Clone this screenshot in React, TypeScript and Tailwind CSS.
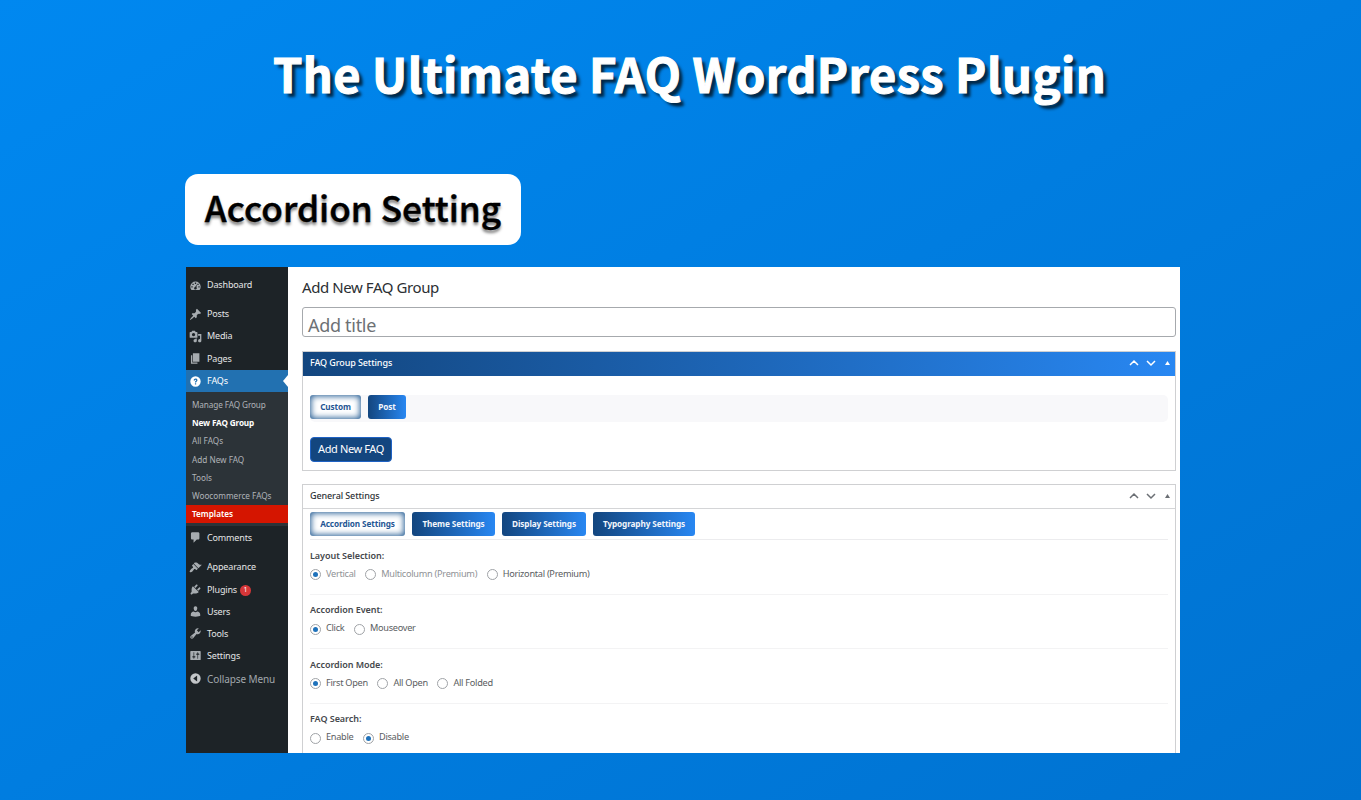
import type { ReactNode } from "react";

const ICONS: Record<string, string> = {
  dashboard:
    "M3.76 17h12.48A8 8 0 1 0 3.76 17zM9 5.5h2v2H9zM5.2 7.2h2v2h-2zM12.8 7.2h2v2h-2zM3.6 11h2v2h-2zM14.4 11h2v2h-2zM12.4 8.2l-1 4.6a2 2 0 1 1-2-.6z",
  posts:
    "M10.44 3.02l1.82-1.82 6.36 6.35-1.83 1.82c-1.05-.68-2.48-.57-3.41.36l-.75.75c-.92.93-1.04 2.35-.35 3.41l-1.83 1.82-2.41-2.41-2.8 2.79c-.42.42-3.38 2.71-3.8 2.29s1.86-3.39 2.28-3.81l2.79-2.79L4.1 9.36l1.83-1.82c1.05.69 2.48.57 3.4-.36l.75-.75c.93-.92 1.05-2.35.36-3.41z",
  media:
    "M13 11V4c0-.55-.45-1-1-1h-1.67L9 1H5L3.67 3H2c-.55 0-1 .45-1 1v7c0 .55.45 1 1 1h10c.55 0 1-.45 1-1zM7 4.5c1.38 0 2.5 1.12 2.5 2.5S8.38 9.5 7 9.5 4.5 8.38 4.5 7 5.62 4.5 7 4.5zM14 6h5v10.5c0 1.38-1.12 2.5-2.5 2.5S14 17.88 14 16.5s1.12-2.5 2.5-2.5c.17 0 .34.02.5.05V9h-3V6zm-4 8.05V13h2v3.5c0 1.38-1.12 2.5-2.5 2.5S7 17.88 7 16.5 8.12 14 9.5 14c.17 0 .34.02.5.05z",
  pages: "M6 15V2h10v13H6zm-1 1h8v2H3V5h2v11z",
  faqs:
    "M18 10a8 8 0 1 0-16 0 8 8 0 0 0 16 0zM7.2 8.3C7.2 6.600 8.400 5.500 10.100 5.500s2.900 1 2.900 2.500c0 1.900-2 2-2 3.500H9.100c0-2.200 1.900-2.300 1.900-3.400 0-.6-.4-.9-1-.9s-1 .4-1 1.100zM9.100 12.600H11v1.900H9.100z",
  comments:
    "M5 2h9c1.1 0 2 .9 2 2v7c0 1.1-.9 2-2 2h-2l-5 5v-5H5c-1.1 0-2-.9-2-2V4c0-1.1.9-2 2-2z",
  appearance:
    "M14.48 11.06L7.41 3.99l1.5-1.5c.5-.56 2.3-.47 3.51.32 1.21.8 1.43 1.28 2.91 2.1 1.18.64 2.45 1.26 4.45.85zm-.71.71L6.7 4.7 4.93 6.47c-.39.39-.39 1.02 0 1.41l1.06 1.06c.39.39.39 1.03 0 1.42-.6.6-1.43 1.11-2.21 1.69-.35.26-.7.53-1.01.84C1.43 14.23.4 16.08 1.4 17.07c.99 1 2.84-.03 4.18-1.36.31-.31.58-.66.85-1.02.57-.78 1.08-1.61 1.69-2.21.39-.39 1.02-.39 1.41 0l1.06 1.06c.39.39 1.02.39 1.41 0z",
  plugins:
    "M13.11 4.36L9.87 7.6 8 5.73l3.24-3.24c.35-.34 1.05-.2 1.56.32.52.51.66 1.21.31 1.55zm-8 1.77l.91-1.12 9.01 9.01-1.19.84c-.71.71-2.63 1.16-3.82 1.16H6.14L4.9 17.26c-.59.59-1.54.59-2.12 0-.59-.58-.59-1.53 0-2.12l1.24-1.24v-3.88c0-1.13.4-3.19 1.09-3.89zm7.26 3.97l3.24-3.24c.34-.35 1.04-.21 1.55.31.52.51.66 1.21.31 1.55l-3.24 3.25z",
  users:
    "M10 9.250c-2.270 0-2.730-3.440-2.730-3.440C7 4.020 7.820 2 9.970 2c2.160 0 2.980 2.020 2.710 3.810 0 0-.41 3.440-2.680 3.440zM2.760 17.020v-2.490c0-2.600 2-4.200 4.470-4.480 1.700 1.300 3.900 1.300 5.490 0 2.390.2 4.520 2 4.520 4.480v2.490s-3.650 1.130-7.240 1.130-7.240-1.130-7.240-1.130z",
  tools:
    "M16.68 9.77c-1.34 1.34-3.3 1.67-4.95.99l-5.41 6.52c-.99.99-2.59.99-3.58 0s-.99-2.59 0-3.57l6.52-5.42c-.68-1.65-.35-3.61.99-4.95 1.28-1.28 3.12-1.62 4.72-1.06l-2.89 2.89 2.82 2.82 2.86-2.87c.53 1.58.18 3.39-1.08 4.65zM3.81 16.21c.4.39 1.04.39 1.43 0 .4-.4.4-1.04 0-1.43-.39-.4-1.03-.4-1.43 0-.39.39-.39 1.03 0 1.43z",
  settings:
    "M18 16V4c0-.55-.45-1-1-1H3c-.55 0-1 .45-1 1v12c0 .55.45 1 1 1h14c.55 0 1-.45 1-1zM8 11h1c.55 0 1 .45 1 1s-.45 1-1 1H8v1.500c0 .28-.22.5-.5.5s-.5-.22-.5-.5V13H6c-.55 0-1-.45-1-1s.45-1 1-1h1V5.500c0-.28.22-.5.5-.5s.5.22.5.5V11zm5-2h-1c-.55 0-1-.45-1-1s.45-1 1-1h1V5.500c0-.28.22-.5.5-.5s.5.22.5.5V7h1c.55 0 1 .45 1 1s-.45 1-1 1h-1v5.500c0 .28-.22.5-.5.5s-.5-.22-.5-.5V9z",
  collapse: "M18 10a8 8 0 1 0-16 0 8 8 0 0 0 16 0zM12.500 5.500v9L6.500 10z",
};

function Icon({ name, className }: { name: string; className: string }) {
  return (
    <svg viewBox="0 0 20 20" className={`size-[13px] shrink-0 ${className}`} fill="currentColor" fillRule="evenodd">
      <path d={ICONS[name]} />
    </svg>
  );
}

function MenuItem({ icon, label, height = "h-[22px]", children }: { icon: string; label: string; height?: string; children?: ReactNode }) {
  return (
    <div className={`flex items-center pl-[3px] text-[9px] text-[#e4e5e6] ${height}`}>
      <Icon name={icon} className="mr-[5px] text-[#a7acb0]" />
      <span className="tracking-[-0.15px]">{label}</span>
      {children}
    </div>
  );
}

function Sidebar() {
  return (
    <nav className="w-[102px] shrink-0 bg-[#1d2327] pt-[7px]">
      <MenuItem icon="dashboard" label="Dashboard" />
      <div className="h-[7px]" />
      <MenuItem icon="posts" label="Posts" />
      <MenuItem icon="media" label="Media" />
      <MenuItem icon="pages" label="Pages" height="h-[23px]" />
      <div className="relative flex h-[22px] items-center bg-[#2271b1] pl-[3px] text-[9px] text-white">
        <Icon name="faqs" className="mr-[5px]" />
        <span className="tracking-[-0.1px]">FAQs</span>
        <svg viewBox="0 0 5 12" className="absolute top-[5px] right-0 h-3 w-[5px]" fill="#fff">
          <path d="M5 0v12L0 6z" />
        </svg>
      </div>
      <div className="h-[134px] bg-[#2c3338] pt-1 text-[8.2px] text-[#b0b4b8]">
        <div className="flex h-[18px] items-center pl-1.5 tracking-[-0.1px]">Manage FAQ Group</div>
        <div className="flex h-[18px] items-center pl-1.5 font-bold tracking-[-0.15px] text-white">New FAQ Group</div>
        <div className="flex h-[19px] items-center pl-1.5">All FAQs</div>
        <div className="flex h-[18px] items-center pl-1.5">Add New FAQ</div>
        <div className="flex h-[18px] items-center pl-1.5">Tools</div>
        <div className="flex h-[18px] items-center pl-1.5">Woocommerce FAQs</div>
        <div className="flex h-[18px] items-center bg-[#d51500] pl-1.5 font-semibold text-white">Templates</div>
      </div>
      <MenuItem icon="comments" label="Comments" height="h-[23px]" />
      <div className="h-[7px]" />
      <MenuItem icon="appearance" label="Appearance" />
      <MenuItem icon="plugins" label="Plugins" height="h-[22.500px]">
        <span className="mt-0.5 ml-[3px] flex size-[11px] items-center justify-center rounded-full bg-[#d63638] text-[7px] text-white">1</span>
      </MenuItem>
      <MenuItem icon="users" label="Users" />
      <MenuItem icon="tools" label="Tools" />
      <MenuItem icon="settings" label="Settings" />
      <div className="mt-[1.500px] flex h-[22px] items-center pl-[3px] text-[10px] tracking-[-0.1px] text-[#a2a8ad]">
        <Icon name="collapse" className="mr-[5px] mb-0.5 text-[#c3c6c9]" />
        <span>Collapse Menu</span>
      </div>
    </nav>
  );
}

function PanelControls({ className }: { className: string }) {
  return (
    <svg viewBox="0 0 42 8" className={`h-2 w-[42px] ${className}`} fill="none" stroke="currentColor" strokeWidth="1.500">
      <path d="M1 6l4-4 4 4M18 2l4 4 4-4" />
      <path d="M36 6l2.500-4L41 6z" fill="currentColor" stroke="none" />
    </svg>
  );
}

function Tab({ label, className }: { label: string; className: string }) {
  return (
    <div className={`flex h-6 items-center justify-center rounded-[3px] bg-linear-to-r from-[#13467f] to-[#2887f2] text-[8.2px] font-bold tracking-[-0.1px] text-[#f2f6fc] ${className}`}>
      {label}
    </div>
  );
}

function ActiveTab({ label, className }: { label: string; className: string }) {
  return (
    <div className={`flex h-6 items-center justify-center rounded-[3px] bg-white text-[8.2px] font-bold tracking-[-0.1px] text-[#1f5694] shadow-[inset_0_0_6px_1px_#1d5790] ${className}`}>
      {label}
    </div>
  );
}

function Radio({ label, checked, className = "text-[#5a5d61]" }: { label: string; checked?: boolean; className?: string }) {
  return (
    <div className={`flex items-center ${className}`}>
      <span className="mr-[5px] flex size-[11px] items-center justify-center rounded-full border border-[#a0a3a7] bg-white">
        {checked && <span className="size-[5px] rounded-full bg-[#1f72bb]" />}
      </span>
      <span className="mb-0.5 tracking-[-0.28px]">{label}</span>
    </div>
  );
}

function Setting({ title, children }: { title: string; children: ReactNode }) {
  return (
    <div className="h-[54.500px] shrink-0 border-b border-[#f3f3f4] pt-[9.500px]">
      <div className="flex h-3 items-center text-[9px] font-semibold tracking-[-0.05px] text-[#45484c]">{title}</div>
      <div className="mt-[7px] flex h-3 items-center gap-[9.500px] text-[9.2px]">{children}</div>
    </div>
  );
}

export default function App() {
  return (
    <div className="h-[800px] w-[1361px] overflow-hidden bg-linear-to-br from-[#0088f0] to-[#0072d0] font-['Noto_Sans',sans-serif]">
      <h1 className="flex h-[174px] items-start pt-[37px] pl-[273px] font-['Noto_Sans_CJK_SC',sans-serif] text-[47px] leading-[72px] font-bold tracking-[0.42px] whitespace-nowrap text-white [-webkit-text-stroke:1.1px_#fff] [text-shadow:4px_4px_3px_rgba(0,0,0,0.7)]">
        The Ultimate FAQ WordPress Plugin
      </h1>
      <h2 className="ml-[185px] flex h-[71px] w-[336px] items-center justify-center rounded-[13px] bg-white pb-[5px] font-['Noto_Sans_CJK_SC',sans-serif] text-[35.2px] leading-none font-medium whitespace-nowrap text-black [-webkit-text-stroke:0.4px_#000] [text-shadow:0_3px_3px_rgba(0,0,0,0.5)]">
        Accordion Setting
      </h2>

      <div className="mt-[22px] ml-[186px] flex h-[486px] w-[994px] overflow-hidden bg-white whitespace-nowrap">
        <Sidebar />
        <main className="flex h-[486px] w-[892px] flex-col pr-1 pl-3.5">
          <div className="flex h-10 shrink-0 items-center text-[15px] tracking-[-0.42px] text-[#2b2f33]">Add New FAQ Group</div>
          <div className="flex h-[30px] shrink-0 items-center rounded-[3px] border border-[#a6a9ad] pt-1.5 pl-[5px] text-[18px] leading-none tracking-[-0.3px] text-[#6d7175]">
            Add title
          </div>

          <section className="mt-3.5 h-[120px] shrink-0 border border-[#cfd0d2]">
            <div className="flex h-6 items-center justify-between bg-linear-to-r from-[#13467f] to-[#2887f2] pr-1 pb-0.5 pl-[7px] text-[9px] font-medium tracking-[-0.1px] text-white">
              <span>FAQ Group Settings</span>
              <PanelControls className="text-white" />
            </div>
            <div className="mx-[7px] mt-[19px] flex h-[27px] gap-[7px] rounded-[5px] bg-[#f8f8fa]">
              <ActiveTab label="Custom" className="w-[51px]" />
              <Tab label="Post" className="w-[38px]" />
            </div>
            <div className="mt-[15px] ml-[7px] flex h-[25px] w-[82px] items-center justify-center rounded-[4px] border border-[#1f62c4] bg-[#13467f] text-[11px] tracking-[-0.4px] text-white">
              Add New FAQ
            </div>
          </section>

          <section className="mt-[13px] h-[280px] shrink-0 border border-[#cfd0d2]">
            <div className="flex h-6 items-center justify-between border-b border-[#d4d5d7] pr-1 pb-px pl-[7px] text-[9px] font-medium tracking-[-0.1px] text-[#2f3337]">
              <span>General Settings</span>
              <PanelControls className="text-[#6b6f74]" />
            </div>
            <div className="mx-[7px]">
              <div className="flex h-[31px] gap-[7px] border-b border-[#ececee] pt-[3px]">
                <ActiveTab label="Accordion Settings" className="w-[95px]" />
                <Tab label="Theme Settings" className="w-[83px]" />
                <Tab label="Display Settings" className="w-[84px]" />
                <Tab label="Typography Settings" className="w-[102px]" />
              </div>
              <Setting title="Layout Selection:">
                <Radio label="Vertical" checked className="text-[#8f9296]" />
                <Radio label="Multicolumn (Premium)" className="text-[#8f9296]" />
                <Radio label="Horizontal (Premium)" />
              </Setting>
              <Setting title="Accordion Event:">
                <Radio label="Click" checked />
                <Radio label="Mouseover" />
              </Setting>
              <Setting title="Accordion Mode:">
                <Radio label="First Open" checked />
                <Radio label="All Open" />
                <Radio label="All Folded" />
              </Setting>
              <Setting title="FAQ Search:">
                <Radio label="Enable" />
                <Radio label="Disable" checked />
              </Setting>
            </div>
          </section>
        </main>
      </div>
    </div>
  );
}
